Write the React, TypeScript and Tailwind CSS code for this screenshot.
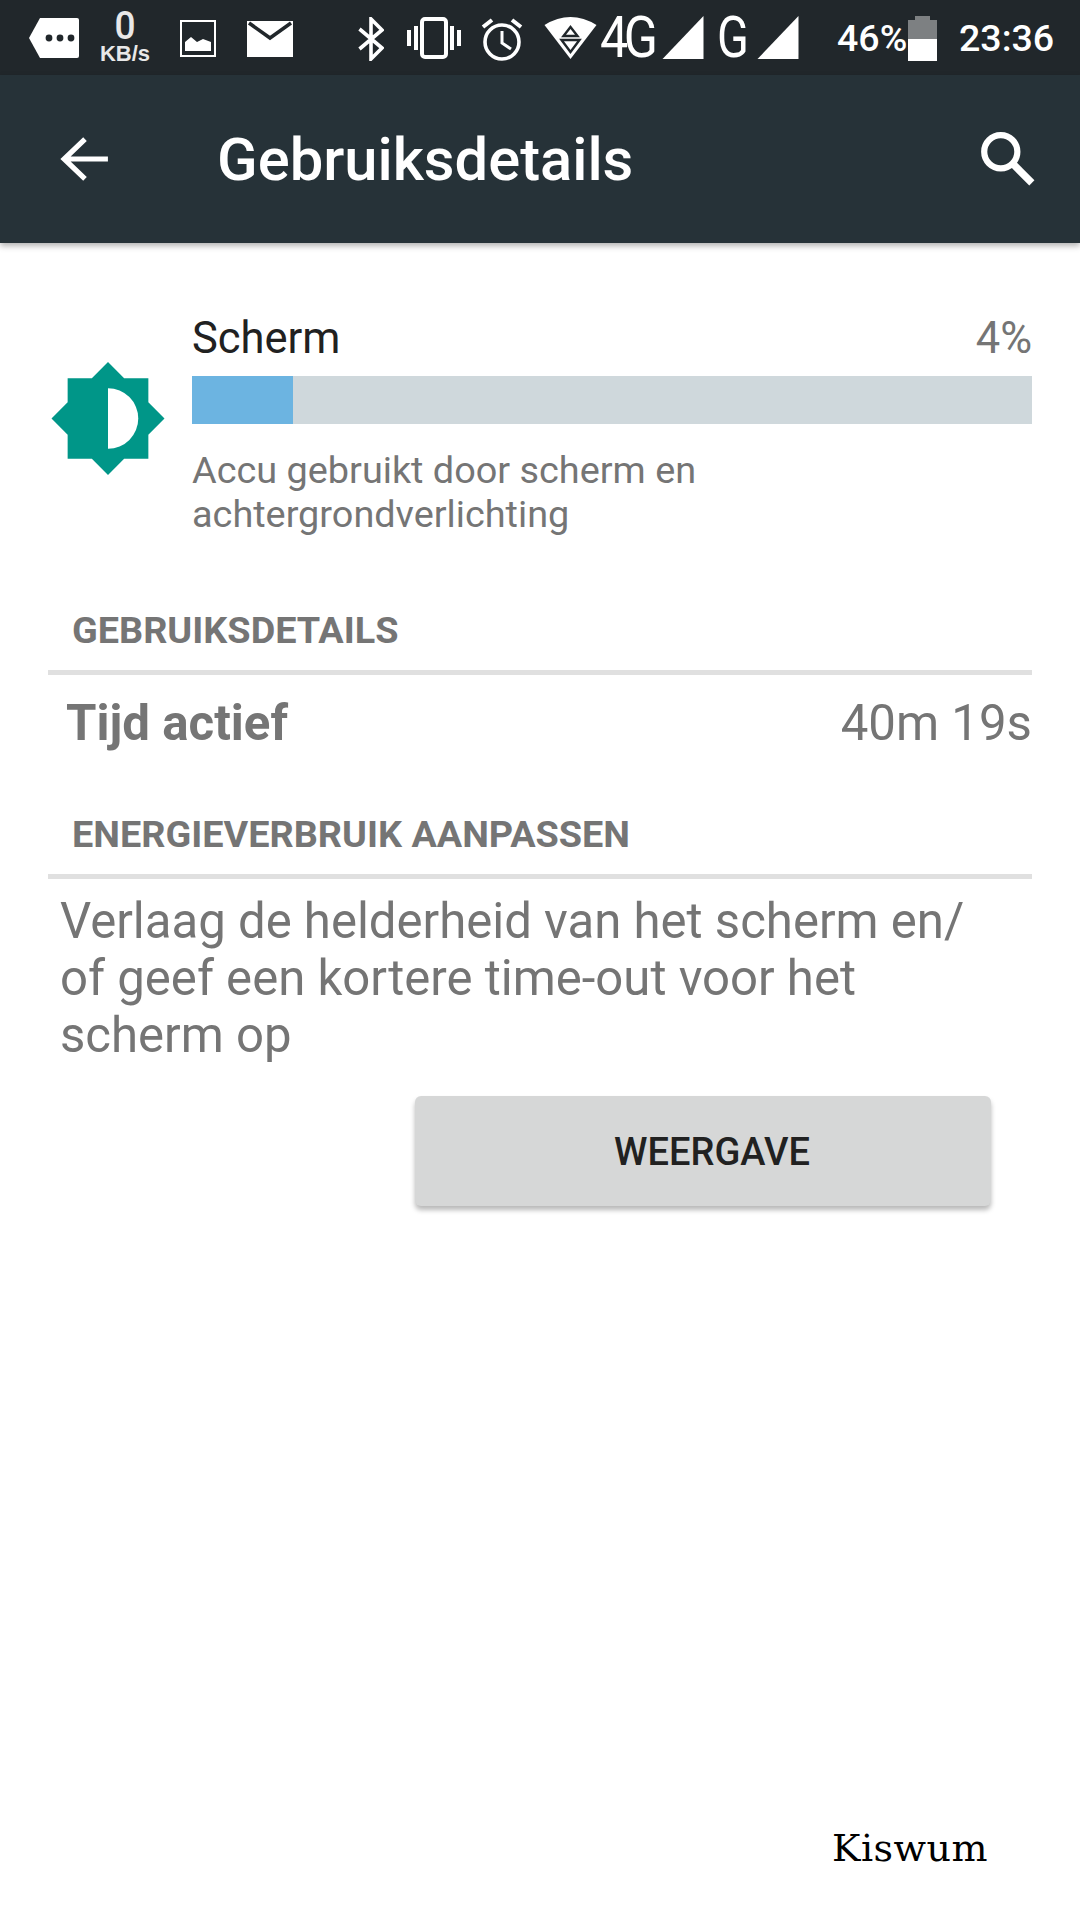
import React from "react";

const F = "font-['Roboto',sans-serif]";

function StatusBar() {
  return (
    <div className="h-[75px] bg-[#21272b] flex items-center shrink-0 relative text-white">
      <svg width="50" height="40" viewBox="0 0 50 40" className="ml-[29px] shrink-0">
        <path d="M11 0H48a2 2 0 0 1 2 2V38a2 2 0 0 1-2 2H11L0 20Z" fill="#fff" />
        <circle cx="20" cy="20" r="3.4" fill="#21272b" />
        <circle cx="31" cy="20" r="3.4" fill="#21272b" />
        <circle cx="42" cy="20" r="3.4" fill="#21272b" />
      </svg>
      <div className="ml-[21px] w-[50px] shrink-0 flex flex-col items-center font-['Liberation_Sans',sans-serif] font-bold text-[#e8e8e8]">
        <span className={`${F} text-[39px] h-[29px] leading-[29px] font-medium scale-x-[0.95]`}>0</span>
        <span className="text-[22px] mt-[3px] h-[20px] leading-[20px]">KB/s</span>
      </div>
      <svg width="36" height="37" viewBox="0 0 36 37" className="ml-[30px] mt-[2px] shrink-0">
        <rect x="1" y="1" width="34" height="35" fill="none" stroke="#fff" strokeWidth="2" />
        <path d="M5 31V22L11 17L17 22L23 19L31 22V31Z" fill="#fff" />
      </svg>
      <svg width="46" height="36" viewBox="0 0 46 36" className="ml-[31px] mt-[2px] shrink-0">
        <rect width="46" height="36" fill="#fff" />
        <path d="M2 2L23 17L44 2" fill="none" stroke="#21272b" strokeWidth="3.5" />
      </svg>
      <svg width="26" height="44" viewBox="0 0 26 44" className="ml-[65px] mt-[2px] shrink-0">
        <path d="M1.5 12L24 31L13 42V2L24 13L1.5 32" fill="none" stroke="#fff" strokeWidth="3.6" />
      </svg>
      <svg width="54" height="42" viewBox="0 0 54 42" className="ml-[23px] shrink-0">
        <rect x="15" y="2" width="24" height="38" rx="3" fill="none" stroke="#fff" strokeWidth="4" />
        <rect x="0" y="13" width="4" height="16" fill="#fff" />
        <rect x="7" y="9" width="4" height="24" fill="#fff" />
        <rect x="43" y="9" width="4" height="24" fill="#fff" />
        <rect x="50" y="13" width="4" height="16" fill="#fff" />
      </svg>
      <svg width="42" height="44" viewBox="0 0 42 44" className="ml-[20px] mt-[2px] shrink-0">
        <circle cx="21" cy="25" r="17" fill="none" stroke="#fff" strokeWidth="3.6" />
        <path d="M21 14V26L30 32" fill="none" stroke="#fff" strokeWidth="3" />
        <path d="M2 10L11 3M40 10L31 3" fill="none" stroke="#fff" strokeWidth="4" />
      </svg>
      <svg width="53" height="44" viewBox="0 0 52 44" className="ml-[21px] shrink-0">
        <path d="M0 9Q26 -7 52 9L26 43Z" fill="#fff" />
        <path d="M26 11L33 20H19Z" fill="none" stroke="#21272b" strokeWidth="2.4" />
        <path d="M17 24H35L26 36Z" fill="none" stroke="#21272b" strokeWidth="2.4" />
      </svg>
      <span className={`${F} text-[57px] font-normal leading-none tracking-[-5px] ml-[3px] w-[59px] shrink-0 scale-x-[0.88] origin-left whitespace-nowrap`}>4G</span>
      <svg width="42" height="43" viewBox="0 0 40 42" className="ml-[3px] shrink-0"><path d="M0 42L40 0V42Z" fill="#fff" /></svg>
      <span className={`${F} text-[57px] font-normal leading-none ml-[13px] w-[32px] shrink-0 scale-x-[0.82] origin-left`}>G</span>
      <svg width="42" height="43" viewBox="0 0 40 42" className="ml-[8px] shrink-0"><path d="M0 42L40 0V42Z" fill="#fff" /></svg>
      <span className={`${F} text-[37.5px] font-medium leading-none ml-[38px] w-[71px] shrink-0 mt-[3px] whitespace-nowrap`}>46%</span>
      <div className="w-[29px] h-[45px] shrink-0 flex flex-col items-center mt-[1px]">
        <div className="w-[15px] h-[4px] bg-[#7d8082]" />
        <div className="w-[29px] h-[19px] bg-[#7d8082]" />
        <div className="w-[29px] h-[22px] bg-white" />
      </div>
      <span className={`${F} text-[37.5px] font-medium leading-none ml-[22px] mt-[3px] shrink-0`}>23:36</span>
    </div>
  );
}

function AppBar() {
  return (
    <div className="h-[168px] bg-[#263238] flex items-center shrink-0 text-white shadow-[0_3px_6px_rgba(0,0,0,0.3)] relative">
      <svg width="50" height="50" viewBox="0 0 48 48" className="ml-[60px]">
        <path d="M46 24H4M24 5L4 24L24 43" fill="none" stroke="#fff" strokeWidth="5" />
      </svg>
      <span className={`${F} text-[59.7px] font-medium ml-[107px] leading-none mt-[4px]`}>Gebruiksdetails</span>
      <svg width="58" height="58" viewBox="0 0 56 56" className="ml-auto mr-[44px] mb-[2px]">
        <circle cx="22" cy="22" r="16" fill="none" stroke="#fff" strokeWidth="6" />
        <path d="M34 34L52 52" stroke="#fff" strokeWidth="7" />
      </svg>
    </div>
  );
}

function SectionHeader({ children, className }: { children: React.ReactNode; className?: string }) {
  return (
    <div className={className}>
      <div className="ml-[72px] text-[37.8px] font-bold leading-[42px] text-[#757575]">{children}</div>
      <div className="ml-[48px] mr-[48px] h-[5px] bg-[#e0e0e0] mt-[19px]" />
    </div>
  );
}

export default function App() {
  return (
    <div className={`${F} w-[1080px] h-[1920px] bg-white flex flex-col relative overflow-hidden`}>
      <StatusBar />
      <AppBar />
      <div className="flex pt-[72px] pl-[51px] pr-[48px]">
        <svg width="114" height="113" viewBox="0 0 112 112" className="mt-[47px] shrink-0">
          <path d="M56 0L72 16H96V40L112 56L96 72V96H72L56 112L40 96H16V72L0 56L16 40V16H40Z" fill="#009688" />
          <path d="M56 26A30 30 0 0 1 56 86Z" fill="#fff" />
        </svg>
        <div className="ml-[27px] flex-1">
          <div className="flex justify-between items-center h-[48px]">
            <span className="text-[43.5px] leading-none text-[#212121]">Scherm</span>
            <span className="text-[43.5px] leading-none text-[#757575]">4%</span>
          </div>
          <div className="h-[48px] bg-[#cfd8dc] mt-[13px]">
            <div className="h-full w-[101px] bg-[#6cb4e1]" />
          </div>
          <div className="text-[37.85px] leading-[44px] text-[#757575] mt-[24px]">
            Accu gebruikt door scherm en<br />achtergrondverlichting
          </div>
        </div>
      </div>
      <SectionHeader className="mt-[73px]">GEBRUIKSDETAILS</SectionHeader>
      <div className="flex justify-between items-center ml-[66px] mr-[48px] mt-[20px] h-[58px] text-[#757575] text-[49.2px] leading-none">
        <span className="font-bold">Tijd actief</span>
        <span>40m 19s</span>
      </div>
      <SectionHeader className="mt-[60px]">ENERGIEVERBRUIK AANPASSEN</SectionHeader>
      <div className="ml-[60px] mt-[14px] text-[49.1px] leading-[57px] text-[#757575]">
        Verlaag de helderheid van het scherm en/<br />of geef een kortere time-out voor het<br />scherm op
      </div>
      <button className="ml-[415px] mt-[32px] w-[576px] h-[110px] bg-[#d6d7d7] rounded-[6px] shadow-[0_4px_5px_rgba(0,0,0,0.28)] text-[#212121] text-[38px] font-medium leading-none pl-[18px] pt-[2px]">
        WEERGAVE
      </button>
      <div className="absolute left-[832px] top-[1826px] font-['DejaVu_Serif',serif] text-[38px] leading-[44px] tracking-[0.5px] text-black">Kiswum</div>
    </div>
  );
}
